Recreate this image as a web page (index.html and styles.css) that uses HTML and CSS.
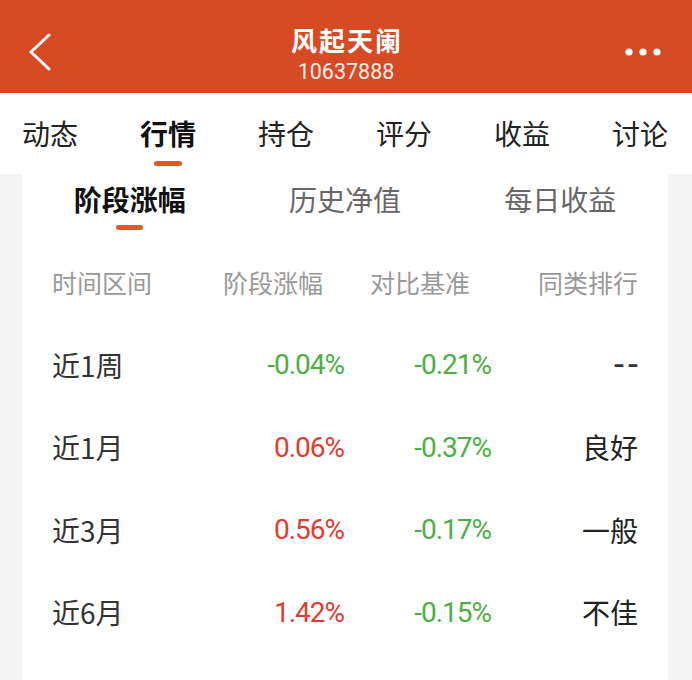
FILE: index.html
```html
<!DOCTYPE html>
<html>
<head>
    <meta charset="utf-8">
    <title>风起天阑</title>
    <link rel="stylesheet" href="styles.css">
</head>
<body>
    <div class="topbar">
        <div class="topbar-back">
            <svg width="22" height="38" viewBox="0 0 22 38">
                <path d="M20 2 L2 19 L20 36" fill="none" stroke="#fff" stroke-width="3" stroke-linecap="round" stroke-linejoin="round"/>
            </svg>
        </div>
        <div class="topbar-title">
            <div class="fund-name">风起天阑</div>
            <div class="fund-code">10637888</div>
        </div>
        <div class="topbar-more">
            <svg width="36" height="8" viewBox="0 0 36 8">
                <circle cx="4" cy="4" r="3.6" fill="#fff"/>
                <circle cx="18" cy="4" r="3.6" fill="#fff"/>
                <circle cx="32" cy="4" r="3.6" fill="#fff"/>
            </svg>
        </div>
    </div>

    <!-- main tabs -->
    <div class="tabs">
        <div class="tab">动态</div>
        <div class="tab active">行情</div>
        <div class="tab">持仓</div>
        <div class="tab">评分</div>
        <div class="tab">收益</div>
        <div class="tab">讨论</div>
    </div>

    <div class="panel">
        <div class="subtabs">
            <div class="subtab active">阶段涨幅</div>
            <div class="subtab">历史净值</div>
            <div class="subtab">每日收益</div>
        </div>

        <div class="rank-table">
            <div class="th th-left">时间区间</div>
            <div class="th">阶段涨幅</div>
            <div class="th">对比基准</div>
            <div class="th th-last">同类排行</div>

            <div class="td-label">近1周</div>
            <div class="td-num down">-0.04%</div>
            <div class="td-num down">-0.21%</div>
            <div class="td-rank dash">--</div>

            <div class="td-label">近1月</div>
            <div class="td-num up">0.06%</div>
            <div class="td-num down">-0.37%</div>
            <div class="td-rank">良好</div>

            <div class="td-label">近3月</div>
            <div class="td-num up">0.56%</div>
            <div class="td-num down">-0.17%</div>
            <div class="td-rank">一般</div>

            <div class="td-label">近6月</div>
            <div class="td-num up">1.42%</div>
            <div class="td-num down">-0.15%</div>
            <div class="td-rank">不佳</div>
        </div>
    </div>
</body>
</html>
```

FILE: styles.css
```css
body {
    margin: 0;
    background-color: #f4f4f4;
    font-family: "Noto Sans CJK SC", "Noto Sans", sans-serif;
    min-height: 680px;
    display: flex;
    flex-direction: column;
}

/* orange header */
.topbar {
    height: 93px;
    background-color: #d64a24;
    display: grid;
    grid-template-columns: 1fr auto 1fr;
    align-items: start;
    color: #fff;
}

.topbar-back {
    padding: 33px 0 0 29px;
}

.topbar-back svg,
.topbar-more svg {
    display: block;
}

.topbar-title {
    padding-top: 25px;
    text-align: center;
}

.fund-name {
    font-size: 26px;
    font-weight: bold;
    letter-spacing: 2px;
    margin-right: -2px;
    line-height: 30px;
}

.fund-code {
    font-family: Roboto, sans-serif;
    font-size: 21.5px;
    line-height: 24px;
    margin-top: 5px;
    color: rgba(255, 255, 255, 0.92);
}

.topbar-more {
    justify-self: end;
    padding: 48px 31px 0 0;
}

/* main tabs */
.tabs {
    background-color: #fff;
    display: flex;
    justify-content: space-between;
    padding: 20px 24px 8px 22px;
}

.tab {
    font-size: 28px;
    line-height: 40px;
    color: #222;
    display: flex;
    flex-direction: column;
    align-items: center;
}

.tab::after {
    content: "";
    width: 28px;
    height: 5px;
    margin-top: 8px;
    border-radius: 3px;
}

.tab.active {
    font-weight: bold;
    color: #111;
}

.tab.active::after {
    background-color: #e8542c;
}

/* white card */
.panel {
    flex: 1;
    margin: 0 24px 0 22px;
    background-color: #fff;
}

.subtabs {
    display: grid;
    grid-template-columns: 1fr 1fr 1fr;
    padding-top: 5px;
}

.subtab {
    font-size: 28px;
    line-height: 40px;
    color: #666;
    display: flex;
    flex-direction: column;
    align-items: center;
}

.subtab::after {
    content: "";
    width: 27px;
    height: 5px;
    margin-top: 6px;
    border-radius: 3px;
}

.subtab.active {
    font-weight: bold;
    color: #111;
}

.subtab.active::after {
    background-color: #e8542c;
}

/* table */
.rank-table {
    display: grid;
    grid-template-columns: 148px 144px 147px 147px;
    grid-auto-rows: 82.5px;
    align-items: center;
    padding: 11px 30px 0 30px;
}

.th {
    font-size: 25px;
    color: #999;
    text-align: right;
    padding-right: 21px;
}

.th-left {
    text-align: left;
    padding-right: 0;
}

.th-last {
    padding-right: 0;
}

.td-label {
    font-size: 28px;
    color: #333;
}

.td-num {
    font-family: Roboto, sans-serif;
    font-size: 28px;
    letter-spacing: -1px;
    text-align: right;
}

.td-rank {
    font-size: 28px;
    color: #222;
    text-align: right;
}

.td-rank.dash {
    font-family: Roboto, sans-serif;
    font-size: 36px;
    letter-spacing: 4px;
    margin-right: -4px;
    color: #333;
}

.up {
    color: #e53a30;
}

.down {
    color: #4caf45;
}
```
